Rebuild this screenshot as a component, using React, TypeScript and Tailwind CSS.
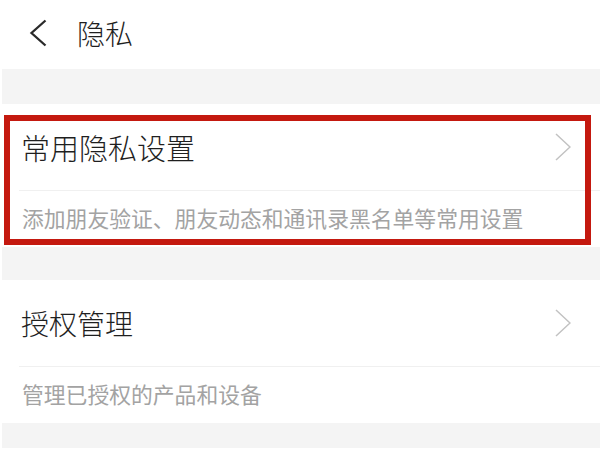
const SECTIONS = [
  { id: 'common', title: '常用隐私设置', desc: '添加朋友验证、朋友动态和通讯录黑名单等常用设置', marked: true, size: 'text-[29px]' },
  { id: 'auth', title: '授权管理', desc: '管理已授权的产品和设备', marked: false, size: 'text-[28px]' },
]

function Chevron({ className }: { className?: string }) {
  return (
    <svg viewBox="0 0 16 28" className={className} fill="none">
      <polyline points="1,1 15,14 1,27" stroke="currentColor" strokeWidth="1.5" strokeLinejoin="miter" />
    </svg>
  )
}

export default function App() {
  return (
    <div className="w-[600px] h-[450px] bg-white overflow-hidden font-['Noto_Sans_CJK_SC','Noto_Sans',sans-serif]">
      {/* header */}
      <div className="h-[69px] flex items-center pb-[4px]">
        <svg viewBox="0 0 18 28" className="w-[18px] h-[28px] ml-[29px] text-[#2a2a2a]" fill="none">
          <polyline points="16.5,1.5 2.5,14 16.5,26.5" stroke="currentColor" strokeWidth="2.3" />
        </svg>
        <h1 className="ml-[30px] text-[28px] leading-none font-light text-[#1f1f1f]">隐私</h1>
      </div>

      {SECTIONS.map((s, i) => (
        <div key={s.id}>
          <div className={`ml-[2px] bg-[#f4f4f4] ${i === 0 ? 'h-[35px]' : 'h-[33px]'}`} />
          <div className="relative h-[143px] bg-white">
            <div className="h-[86px] flex items-center justify-between pl-[21px] pr-[29px]">
              <p className={`${s.size} leading-none font-light text-[#1f1f1f]`}>{s.title}</p>
              <Chevron className="w-[16px] h-[28px] text-[#c2c2c2]" />
            </div>
            <div className="ml-[19px] h-px bg-[#f0f0f0]" />
            <div className="h-[56px] flex items-center pb-[3px] pl-[22px]">
              <p className="text-[21.8px] leading-none text-[#a3a3a3]">{s.desc}</p>
            </div>
            {s.marked && (
              <div className="absolute left-[4px] top-[11px] w-[587px] h-[130px] border-[6px] border-[#c4190f]" />
            )}
          </div>
        </div>
      ))}
      <div className="ml-[2px] h-[25px] bg-[#f4f4f4]" />
    </div>
  )
}
